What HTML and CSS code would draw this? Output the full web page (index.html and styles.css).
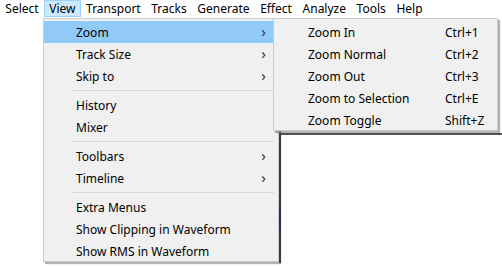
FILE: index.html
```html
<!DOCTYPE html>
<html lang="en">
<head>
    <meta charset="UTF-8">
    <title>View menu</title>
    <link rel="stylesheet" href="styles.css">
</head>
<body>
    <!-- Menu Bar -->
    <div class="menubar">
        <span class="menubar-item">Select</span>
        <span class="menubar-item open">View</span>
        <span class="menubar-item">Transport</span>
        <span class="menubar-item">Tracks</span>
        <span class="menubar-item">Generate</span>
        <span class="menubar-item">Effect</span>
        <span class="menubar-item">Analyze</span>
        <span class="menubar-item">Tools</span>
        <span class="menubar-item">Help</span>
    </div>

    <!-- Window content behind the menus -->
    <div class="backdrop">
        <div class="panel">
            <div class="panel-mark"></div>
        </div>
    </div>

    <!-- View Menu -->
    <div class="menu view-menu">
        <div class="menu-item active"><span>Zoom</span><span class="chevron">&rsaquo;</span></div>
        <div class="menu-item"><span>Track Size</span><span class="chevron">&rsaquo;</span></div>
        <div class="menu-item"><span>Skip to</span><span class="chevron">&rsaquo;</span></div>
        <div class="separator"></div>
        <div class="menu-item"><span>History</span></div>
        <div class="menu-item"><span>Mixer</span></div>
        <div class="separator"></div>
        <div class="menu-item"><span>Toolbars</span><span class="chevron">&rsaquo;</span></div>
        <div class="menu-item"><span>Timeline</span><span class="chevron">&rsaquo;</span></div>
        <div class="separator"></div>
        <div class="menu-item"><span>Extra Menus</span></div>
        <div class="menu-item"><span>Show Clipping in Waveform</span></div>
        <div class="menu-item"><span>Show RMS in Waveform</span></div>
    </div>

    <!-- Zoom Submenu -->
    <div class="menu zoom-menu">
        <div class="menu-item"><span>Zoom In</span><span class="shortcut">Ctrl+1</span></div>
        <div class="menu-item"><span>Zoom Normal</span><span class="shortcut">Ctrl+2</span></div>
        <div class="menu-item"><span>Zoom Out</span><span class="shortcut">Ctrl+3</span></div>
        <div class="menu-item"><span>Zoom to Selection</span><span class="shortcut">Ctrl+E</span></div>
        <div class="menu-item"><span>Zoom Toggle</span><span class="shortcut">Shift+Z</span></div>
    </div>
</body>
</html>
```

FILE: styles.css
```css
/* General Reset */
* {
    margin: 0;
    padding: 0;
    box-sizing: border-box;
}

body {
    font-family: "Segoe UI", "Noto Sans", "Open Sans", sans-serif;
    font-size: 12px;
    color: #000;
    background: #fff;
    height: 100vh;
    overflow: hidden;
    position: relative;
}

/* Menu Bar */
.menubar {
    display: flex;
    height: 19px;
    background: #fff;
}

.menubar-item {
    display: flex;
    align-items: center;
    height: 17px;
    padding: 0 4.3px;
    border: 1px solid transparent;
}

.menubar-item.open {
    background: #cce8ff;
    border-color: #99d1ff;
}

/* Background window */
.backdrop {
    display: flex;
    justify-content: flex-end;
    padding-top: 114px;
}

.panel {
    display: flex;
    width: 223px;
    height: 130px;
    border-top: 2px solid #555;
    border-left: 2px solid #555;
    background: #fff;
}

.panel-mark {
    width: 2px;
    height: 19px;
    margin: 75px 0 0 -2px;
    background: #34408a;
}

/* Drop-down menus */
.menu {
    position: absolute;
    background: #f0f0f0;
    border: 1px solid #ccc;
    padding: 2px 0;
    box-shadow: 2px 2px 1px rgba(0, 0, 0, 0.3);
}

.view-menu {
    top: 18px;
    left: 43px;
    width: 236px;
    height: 244px;
}

.zoom-menu {
    top: 18px;
    left: 273px;
    width: 225px;
    height: 113px;
}

.menu-item {
    display: flex;
    align-items: center;
    justify-content: space-between;
    height: 22px;
    padding-left: 32px;
    padding-right: 12px;
}

.menu-item.active {
    background: #91c9f7;
}

.chevron {
    font-size: 15px;
    color: #333;
    line-height: 1;
    margin-top: -2px;
}

.zoom-menu .menu-item {
    padding-left: 34px;
    padding-right: 10px;
}

.shortcut {
    width: 42px;
}

.separator {
    height: 1px;
    background: #d7d7d7;
    margin: 3px 4px 3px 28px;
}
```
